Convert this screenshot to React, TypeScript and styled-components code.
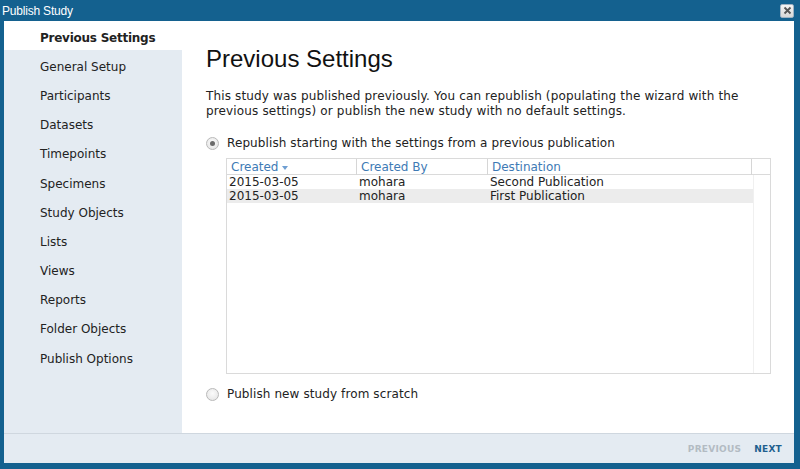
import React from "react";
import styled, { createGlobalStyle } from "styled-components";

const Global = createGlobalStyle`
  html, body { margin: 0; padding: 0; }
  body { font-family: "DejaVu Sans", Verdana, sans-serif; }
`;

const Window = styled.div`
  width: 800px;
  height: 469px;
  background: #14618f;
  display: flex;
  flex-direction: column;
  box-sizing: border-box;
  padding: 0 6px 6px 4px;
`;

const TitleBar = styled.div`
  height: 21px;
  flex: none;
  display: flex;
  align-items: center;
  justify-content: space-between;
  margin-left: -2px;
  margin-right: 0;
`;

const Title = styled.span`
  color: #ffffff;
  font-family: "Liberation Sans", Arial, sans-serif;
  font-size: 12px;
  letter-spacing: -0.2px;
  padding-top: 1px;
`;

const CloseButton = styled.div`
  width: 12px;
  height: 12px;
  border-radius: 2px;
  background: linear-gradient(#f4f4f4, #d8d8d8);
  border: 1px solid #9fb3c4;
  display: flex;
  align-items: center;
  justify-content: center;
`;

const Frame = styled.div`
  flex: 1;
  display: flex;
  flex-direction: column;
  background: #ffffff;
  min-height: 0;
`;

const Main = styled.div`
  flex: 1;
  display: flex;
  min-height: 0;
`;

const Sidebar = styled.nav`
  width: 178px;
  flex: none;
  background: #e4ebf2;
  display: flex;
  flex-direction: column;
`;

const NavItem = styled.div<{ $active?: boolean }>`
  height: 29.2px;
  box-sizing: border-box;
  display: flex;
  align-items: center;
  padding: 4px 0 0 36px;
  font-size: 12px;
  color: #222;
  font-weight: ${(p) => (p.$active ? "bold" : "normal")};
  letter-spacing: ${(p) => (p.$active ? "-0.25px" : "0")};
  background: ${(p) => (p.$active ? "#ffffff" : "transparent")};
`;

const Content = styled.section`
  flex: 1;
  padding: 24px 24px 0 24px;
  display: flex;
  flex-direction: column;
  color: #222;
  font-size: 12px;
`;

const Heading = styled.h1`
  margin: 0;
  font-family: "Liberation Sans", Arial, sans-serif;
  font-weight: normal;
  font-size: 24px;
  line-height: 28px;
  color: #111;
`;

const Paragraph = styled.p`
  margin: 16px 0 0 0;
  line-height: 15px;
  letter-spacing: 0.15px;
`;

const RadioRow = styled.label<{ $top: number }>`
  display: flex;
  align-items: center;
  gap: 8px;
  margin-top: ${(p) => p.$top}px;
  line-height: 15px;
  letter-spacing: 0.1px;
`;

const Radio = styled.span<{ $checked?: boolean }>`
  width: 11px;
  height: 11px;
  border-radius: 50%;
  border: 1px solid #b9b9b9;
  background: radial-gradient(circle at 50% 40%, #fbfbfb, #e2e2e2);
  display: flex;
  align-items: center;
  justify-content: center;
  flex: none;
  &::after {
    content: "";
    width: 5px;
    height: 5px;
    border-radius: 50%;
    background: ${(p) => (p.$checked ? "#6b6b6b" : "transparent")};
  }
`;

const Grid = styled.div`
  margin: 7px 0 0 20px;
  width: 545px;
  height: 216px;
  box-sizing: border-box;
  border: 1px solid #dadada;
  display: flex;
  flex-direction: column;
`;

const HeaderRow = styled.div`
  display: grid;
  grid-template-columns: 130px 131px 264px 1fr;
  height: 16px;
  box-sizing: border-box;
  border-bottom: 1px solid #dadada;
`;

const HeaderCell = styled.div`
  border-right: 1px solid #d6d6d6;
  color: #3e7ab5;
  font-size: 12px;
  line-height: 15px;
  padding: 1px 0 0 4px;
  display: flex;
  align-items: center;
  gap: 3px;
  &:last-child { border-right: none; }
`;

const SortArrow = styled.span`
  width: 0;
  height: 0;
  border-left: 3.5px solid transparent;
  border-right: 3.5px solid transparent;
  border-top: 4px solid #6f9fd2;
  margin-top: 1px;
`;

const Body = styled.div`
  flex: 1;
  width: 526px;
  border-right: 1px solid #f0f0f0;
`;

const DataRow = styled.div<{ $alt?: boolean }>`
  display: grid;
  grid-template-columns: 130px 131px 265px;
  height: 14px;
  line-height: 14px;
  background: ${(p) => (p.$alt ? "#ececec" : "#ffffff")};
`;

const DataCell = styled.div`
  padding-left: 2px;
  font-size: 12px;
  color: #222;
  white-space: nowrap;
`;

const Footer = styled.footer`
  height: 30px;
  flex: none;
  box-sizing: border-box;
  background: #e4ebf2;
  border-top: 1px solid #cfd7df;
  display: flex;
  align-items: center;
  justify-content: flex-end;
  gap: 13px;
  padding-right: 12px;
`;

const NavButton = styled.span<{ $disabled?: boolean }>`
  font-size: 9px;
  font-weight: bold;
  letter-spacing: 0.25px;
  color: ${(p) => (p.$disabled ? "#b3bbc3" : "#1e5f8e")};
`;

const steps = [
  "Previous Settings",
  "General Setup",
  "Participants",
  "Datasets",
  "Timepoints",
  "Specimens",
  "Study Objects",
  "Lists",
  "Views",
  "Reports",
  "Folder Objects",
  "Publish Options",
];

const rows = [
  { created: "2015-03-05", by: "mohara", dest: "Second Publication" },
  { created: "2015-03-05", by: "mohara", dest: "First Publication" },
];

export default function App() {
  return (
    <>
      <Global />
      <Window>
        <TitleBar>
          <Title>Publish Study</Title>
          <CloseButton>
            <svg width="9" height="9" viewBox="0 0 9 9">
              <path d="M1.5 1.5 L7.5 7.5 M7.5 1.5 L1.5 7.5" stroke="#555" strokeWidth="1.8" />
            </svg>
          </CloseButton>
        </TitleBar>
        <Frame>
          <Main>
            <Sidebar>
              {steps.map((s, i) => (
                <NavItem key={s} $active={i === 0}>
                  {s}
                </NavItem>
              ))}
            </Sidebar>
            <Content>
              <Heading>Previous Settings</Heading>
              <Paragraph>
                This study was published previously. You can republish (populating the wizard with the
                previous settings) or publish the new study with no default settings.
              </Paragraph>
              <RadioRow $top={17}>
                <Radio $checked />
                Republish starting with the settings from a previous publication
              </RadioRow>
              <Grid>
                <HeaderRow>
                  <HeaderCell>
                    Created
                    <SortArrow />
                  </HeaderCell>
                  <HeaderCell>Created By</HeaderCell>
                  <HeaderCell>Destination</HeaderCell>
                  <HeaderCell />
                </HeaderRow>
                <Body>
                  {rows.map((r, i) => (
                    <DataRow key={i} $alt={i % 2 === 1}>
                      <DataCell>{r.created}</DataCell>
                      <DataCell>{r.by}</DataCell>
                      <DataCell>{r.dest}</DataCell>
                    </DataRow>
                  ))}
                </Body>
              </Grid>
              <RadioRow $top={13}>
                <Radio />
                Publish new study from scratch
              </RadioRow>
            </Content>
          </Main>
          <Footer>
            <NavButton $disabled>PREVIOUS</NavButton>
            <NavButton>NEXT</NavButton>
          </Footer>
        </Frame>
      </Window>
    </>
  );
}
